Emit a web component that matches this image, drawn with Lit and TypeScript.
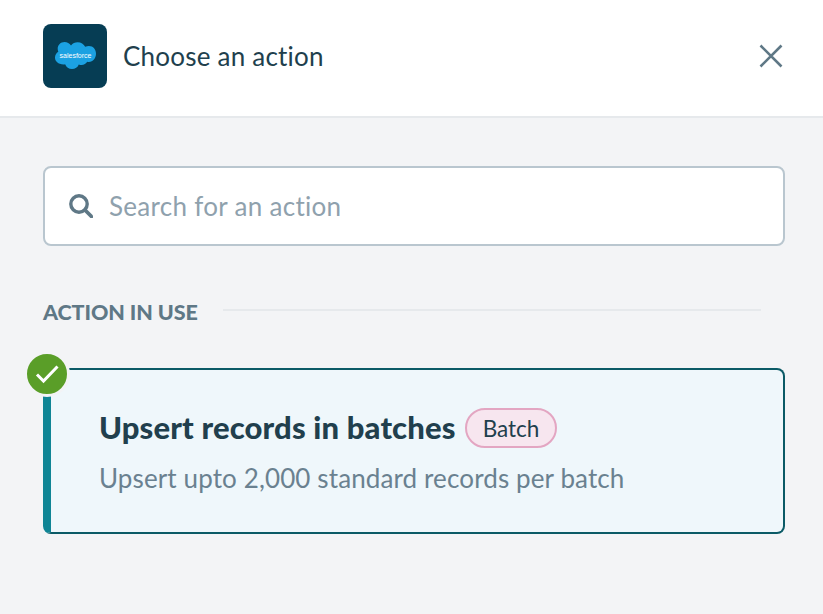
import { LitElement, html, css } from "lit";
import { customElement } from "lit/decorators.js";

@customElement("app-root")
export class AppRoot extends LitElement {
  static styles = css`
    :host { display: block; width: 823px; height: 614px; background: #f3f4f6; font-family: "Lato", "Open Sans", sans-serif; color: #213f4d; overflow: hidden; }
    .header { height: 112px; background: #fff; border-bottom: 2px solid #e6e9ec; display: flex; align-items: center; padding: 0 40px 4px 43px; }
    .logo { width: 64px; height: 64px; border-radius: 8px; background: #063d54; display: flex; align-items: center; justify-content: center; flex: none; }
    .title { margin-left: 16px; font-size: 26px; letter-spacing: 0.22px; flex: 1; }
    .close { display: block; }
    .body { padding: 48px 38px 0 43px; }
    .search { height: 80px; box-sizing: border-box; background: #fff; border: 2px solid #b9c6cf; border-radius: 8px; display: flex; align-items: center; padding-left: 24px; gap: 16px; }
    .placeholder { font-size: 26px; letter-spacing: 0.3px; color: #8fa1ad; }
    .section { display: flex; align-items: center; margin-top: 53px; padding-right: 24px; gap: 25px; }
    .section-label { font-size: 21.5px; font-weight: 900; letter-spacing: -0.1px; color: #5f7886; }
    .section-line { flex: 1; height: 2px; margin-bottom: 4px; background: #e6e9ec; }
    .card { position: relative; margin-top: 43px; height: 166px; box-sizing: border-box; background: #eff7fb; border: 2px solid #0b5a66; border-left: 8px solid #0f8595; border-radius: 8px; padding: 37px 0 0 48px; }
    .check { position: absolute; left: -27px; top: -19px; width: 40px; height: 40px; border-radius: 50%; background: #5a9e28; border: 3px solid #f3f4f6; display: flex; align-items: center; justify-content: center; }
    .name-row { display: flex; align-items: center; gap: 9px; height: 40px; }
    .name { font-size: 31px; font-weight: 900; letter-spacing: 0.15px; color: #213f4d; }
    .badge { height: 40px; margin-top: 2px; box-sizing: border-box; border: 2px solid #e3a6c2; background: #f7e6ef; border-radius: 20px; padding: 0 16px; display: flex; align-items: center; font-size: 22.5px; color: #213f4d; }
    .desc { margin-top: 15px; font-size: 26px; letter-spacing: 0.12px; color: #6a8190; }
    .logotext { font-family: "Liberation Sans", sans-serif; font-size: 7px; fill: #fff; }
  `;

  render() {
    return html`
      <div class="header">
        <div class="logo">
          <svg width="42" height="30" viewBox="0 0 42 30">
            <path fill="#1ba1e2" d="M17 4.500C18.600 2.400 21 1.300 23.600 1.300c3.400 0 6.200 1.800 7.600 4.500 1.200-.5 2.400-.8 3.700-.8C39.300 5 42 8.500 42 12.800s-3 8.200-7.200 8.200c-.6 0-1.100 0-1.600-.2-1.100 2-3.200 3.200-5.600 3.200-1 0-2-.2-2.800-.6-1.100 2.800-3.700 4.600-6.800 4.600-3.200 0-5.800-1.900-6.900-4.800-.5.1-1 .2-1.500.2C4 23.400 1 20.400 1 16.600c0-2.500 1.300-4.700 3.300-5.900-.4-1-.6-2-.6-3 0-3.800 3-6.700 6.800-6.700 2.700 0 5 1.400 6.500 3.500z"/>
            <text class="logotext" x="21.500" y="16.500" text-anchor="middle">salesforce</text>
          </svg>
        </div>
        <div class="title">Choose an action</div>
        <svg class="close" width="24" height="24" viewBox="0 0 24 24"><path d="M1.500 1.500l21 21M22.500 1.500l-21 21" stroke="#5f7886" stroke-width="2.600" fill="none"/></svg>
      </div>
      <div class="body">
        <div class="search">
          <svg width="24" height="24" viewBox="0 0 24 24"><circle cx="10" cy="10" r="8.200" stroke="#5f7886" stroke-width="3.400" fill="none"/><path d="M16 16l6.500 6.500" stroke="#5f7886" stroke-width="3.800" stroke-linecap="round"/></svg>
          <div class="placeholder">Search for an action</div>
        </div>
        <div class="section"><div class="section-label">ACTION IN USE</div><div class="section-line"></div></div>
        <div class="card">
          <div class="check">
            <svg width="24" height="20" viewBox="0 0 24 20"><path d="M2 10.500l6.500 6.500L22.500 2.500" stroke="#fff" stroke-width="3" fill="none"/></svg>
          </div>
          <div class="name-row"><div class="name">Upsert records in batches</div><div class="badge">Batch</div></div>
          <div class="desc">Upsert upto 2,000 standard records per batch</div>
        </div>
      </div>
    `;
  }
}
